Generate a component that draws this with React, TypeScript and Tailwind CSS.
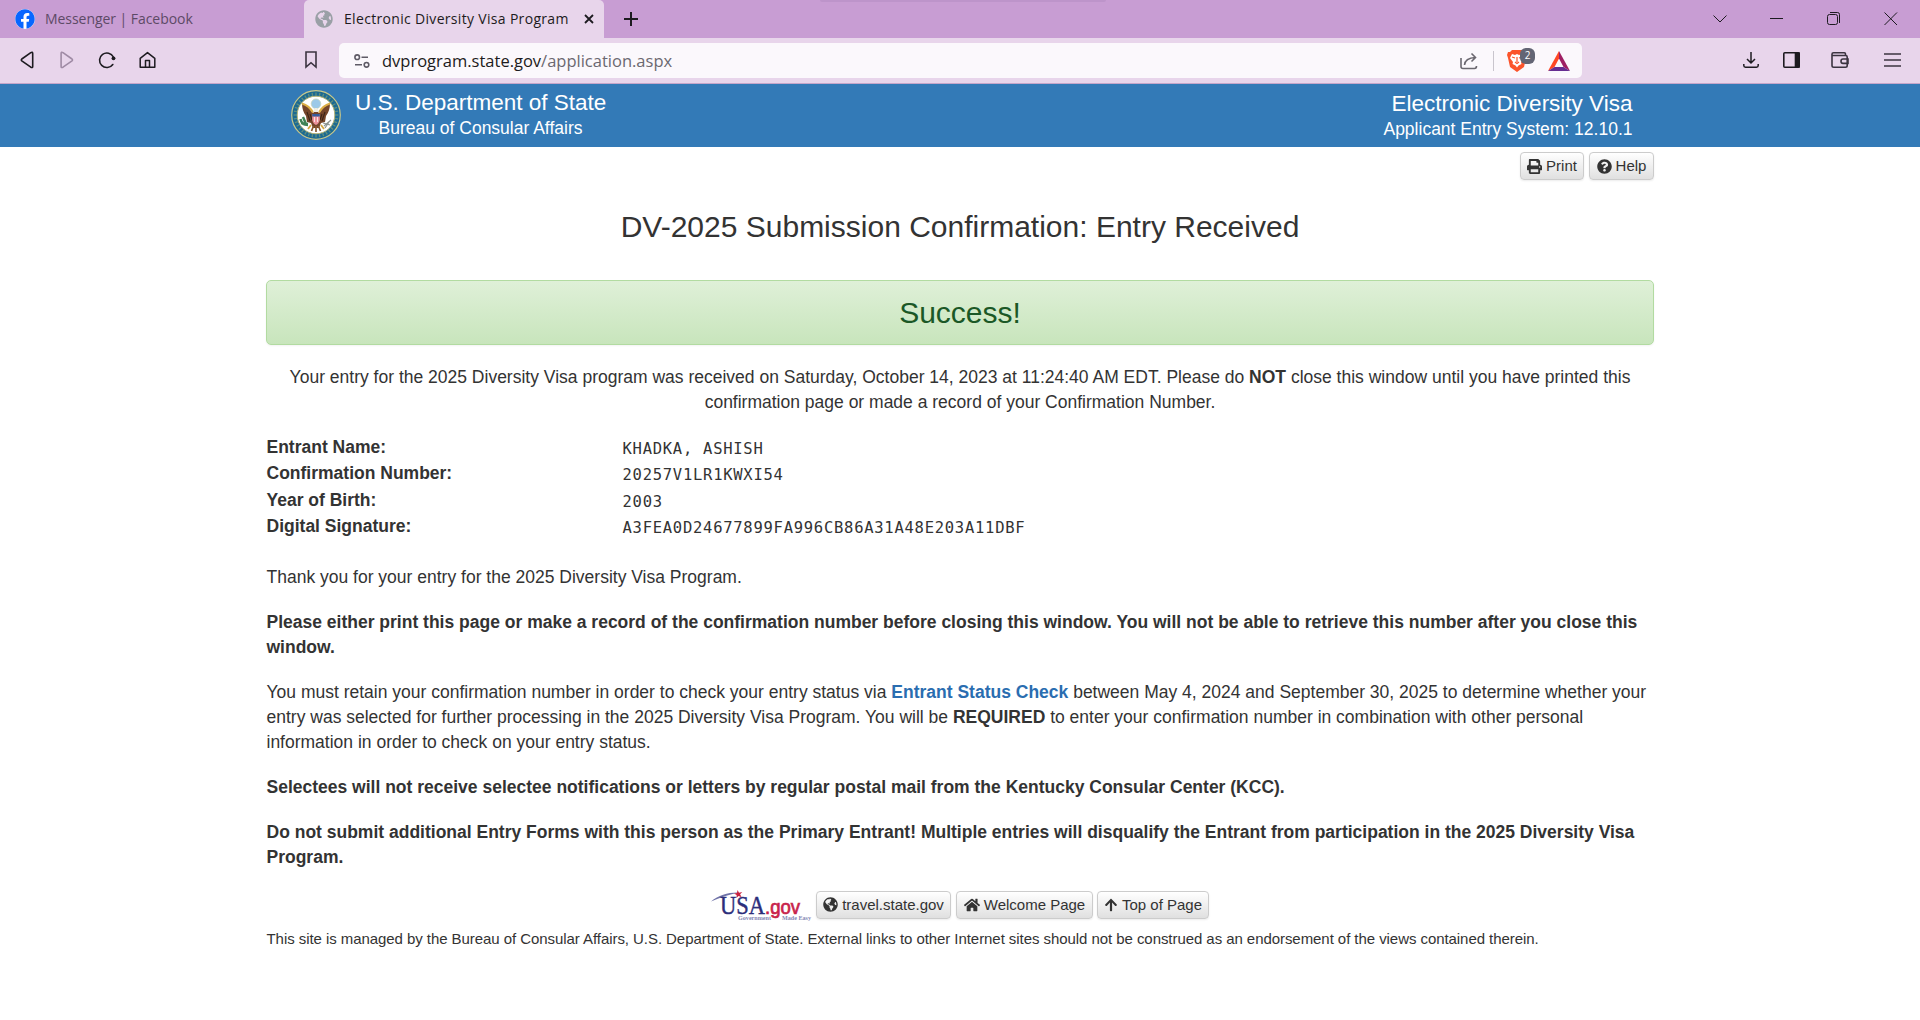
import React from "react";
import { FaPrint, FaQuestionCircle, FaGlobeAmericas, FaHome, FaArrowUp, FaFacebook } from "react-icons/fa";

const btn =
  "inline-flex h-[28px] items-center gap-[4px] rounded-[4px] border border-[#ccc] bg-linear-to-b from-white to-[#e0e0e0] text-[15px] leading-[22px] text-[#333] shadow-[0_1px_2px_rgba(0,0,0,0.08)] whitespace-nowrap";

function Seal() {
  const angles = Array.from({ length: 36 }, (_, i) => i * 10);
  return (
    <svg viewBox="0 0 50 50" className="h-[50px] w-[50px]">
      <circle cx="25" cy="25" r="24.3" fill="#1c6a92" stroke="#c9c88a" strokeWidth="1.2" />
      {angles.map((a) => (
        <path key={a} d="M25 2.6v3" stroke="#8fa873" strokeWidth="1.3" opacity=".6" transform={`rotate(${a} 25 25)`} />
      ))}
      <circle cx="25" cy="25" r="18.8" fill="#fff" stroke="#b9b675" strokeWidth="1" />
      <circle cx="25" cy="13.8" r="4.8" fill="#9cc9e8" stroke="#c4d3c0" strokeWidth=".8" />
      <path d="M11 13l6 4 5 6 3-3 3 3 5-6 6-4q0 8-4 13l-1 6-4 1-2 5h-6l-2-5-4-1-1-6q-4-5-4-13z" fill="#74452a" />
      <path d="M11 13.500q7 2 11 9M39 13.500q-7 2-11 9" stroke="#dcae45" strokeWidth="2.200" fill="none" />
      <path d="M16 22l3 9M19 24l2 6M34 22l-3 9M31 24l-2 6" stroke="#3b2418" strokeWidth="1.100" />
      <path d="M22.500 22q0-4 2.500-4t2.500 4z" fill="#f1eee3" />
      <path d="M21.200 24h7.600v6q-1 4-3.800 5-2.800-1-3.800-5z" fill="#ec929a" />
      <path d="M21.200 24h7.600v2.500h-7.600z" fill="#345c9c" />
      <path d="M23.500 27v5M26.500 27v5" stroke="#fff" strokeWidth=".7" />
      <path d="M9.500 29q1 6 7.500 6M12 27l3 7M10 33l7 1" stroke="#3f8356" strokeWidth="2.400" fill="none" />
      <path d="M33 36l7-6M32 33l7 2M34 38l4-6" stroke="#8c938f" strokeWidth="1.200" />
      <path d="M20 35l-3 4M30 35l3 4" stroke="#d3a640" strokeWidth="1.800" />
      <path d="M22.500 36l-2 5M27.500 36l2 5M25 36v6" stroke="#8a5a30" strokeWidth="1.700" />
    </svg>
  );
}

function UsaGov() {
  return (
    <svg viewBox="0 0 102 32" className="h-[32px] w-[102px]">
      <path d="M0 11.500C8 5 17 2.300 28 2.600 18 5 9 7.500 0 11.500z" fill="#6f72a8" />
      <path d="M26.500 0l1.500 2.700 3.300-.7-2.200 2.300 1.500 2.900-3-1.300-2.200 2.200.3-3.200-2.700-1.400 3-.600z" fill="#c8203f" />
      <text x="9" y="24" fontFamily="Liberation Serif" fontSize="25" fill="#2c2e7b" stroke="#2c2e7b" strokeWidth=".4" textLength="45" lengthAdjust="spacingAndGlyphs">USA</text>
      <text x="54" y="24" fontFamily="Liberation Sans" fontSize="19.500" fill="#c8234a" stroke="#c8234a" strokeWidth=".7" textLength="35" lengthAdjust="spacingAndGlyphs">.gov</text>
      <text x="27" y="29.500" fontFamily="Liberation Serif" fontWeight="bold" fontSize="5.500" fill="#8587b4" textLength="33" lengthAdjust="spacingAndGlyphs">Government</text>
      <text x="71" y="29.500" fontFamily="Liberation Serif" fontWeight="bold" fontSize="5.500" fill="#8587b4" textLength="29" lengthAdjust="spacingAndGlyphs">Made Easy</text>
    </svg>
  );
}

function BrowserChrome() {
  return (
    <>
      <div className="relative flex h-[38px] bg-[#c89dd3]">
        <div className="flex w-[304px] items-center pl-[15px] font-['Open_Sans',sans-serif] text-[#5d4a66]">
          <span className="flex size-[20px] items-center justify-center rounded-full bg-white">
            <FaFacebook className="size-[20px] shrink-0 text-[#0866ff]" />
          </span>
          <span className="mb-[2px] ml-[10px] w-[148px] text-[14px] tracking-[-0.05px] whitespace-nowrap">Messenger | Facebook</span>
        </div>
        <div className="flex w-[300px] items-center rounded-t-[5px] bg-[#e8d5eb] pl-[11px] text-[#1d1b20]">
          <FaGlobeAmericas className="size-[18px] text-[#9aa0a6]" />
          <span className="mb-[2px] ml-[11px] w-[225px] font-['Open_Sans',sans-serif] text-[14px] font-medium tracking-[0.32px] whitespace-nowrap">Electronic Diversity Visa Program</span>
          <svg viewBox="0 0 10 10" className="ml-[15px] size-[10px]" fill="none" stroke="#1d1b20" strokeWidth="1.800"><path d="M1 1l8 8M9 1L1 9" /></svg>
        </div>
        <svg viewBox="0 0 14 14" className="mt-[12px] ml-[20px] size-[14px]" stroke="#1d1b20" strokeWidth="2"><path d="M7 0v14M0 7h14" /></svg>
        <div className="absolute top-0 left-[820px] h-[2px] w-[286px] rounded-b bg-[#bd94ca]" />
        <div className="mr-[22px] ml-auto flex items-center gap-[43px]">
          <svg viewBox="0 0 14 14" className="size-[14px]" fill="none" stroke="#1d1b20"><path d="M.500 3.500L7 10l6.500-6.500" /></svg>
          <svg viewBox="0 0 14 14" className="size-[14px]" fill="none" stroke="#1d1b20"><path d="M0 6.500h13" /></svg>
          <svg viewBox="0 0 14 14" className="size-[14px]" fill="none" stroke="#1d1b20"><rect x=".500" y="2.500" width="10" height="10" rx="2" /><path d="M3 .500h7.500q2 0 2 2V11" /></svg>
          <svg viewBox="0 0 14 14" className="size-[14px]" fill="none" stroke="#1d1b20"><path d="M.500.500l12.500 12.500M13 .500L.500 13" /></svg>
        </div>
      </div>
      <div className="flex h-[46px] items-center border-b border-[#c4a6ca] bg-[#e8d5eb]">
        <svg viewBox="0 0 160 24" className="mb-px ml-[10px] h-[24px] w-[160px] shrink-0" fill="none" stroke="#1d1b20" strokeWidth="1.600" strokeLinecap="round" strokeLinejoin="round">
          <path d="M20.800 4.600q1.900-1 1.900.8v13q0 1.800-1.900.8l-9-6.400q-1-.9 0-1.800z" />
          <path d="M53 4.600q-1.900-1-1.900.8v13q0 1.800 1.900.8l9-6.400q1-.9 0-1.800z" stroke="#9f8ba5" />
          <path d="M102.800 16.500a7.300 7.300 0 1 1 .6-7.500" />
          <circle cx="103.500" cy="10.300" r="1.900" fill="#1d1b20" stroke="none" />
          <path d="M130.200 10.300l7.300-5.700 7.300 5.700v8.900h-14.600zM135.500 19v-6.500h4v6.500" strokeWidth="1.500" />
        </svg>
        <svg viewBox="0 0 12 18" className="mb-px ml-[135px] h-[18px] w-[12px] shrink-0" fill="none" stroke="#3b3440" strokeWidth="1.600"><path d="M1 1h10v15l-5-4.300L1 16z" /></svg>
        <div className="ml-[22px] flex h-[35px] w-[1243px] shrink-0 items-center rounded-[5px] bg-[#fbf8fc] pl-[15px]">
          <svg viewBox="0 0 16 14" className="h-[14px] w-[16px]" fill="none" stroke="#5f5b66" strokeWidth="1.600"><circle cx="3.200" cy="3.200" r="2.300" /><circle cx="12.500" cy="10.800" r="2.300" /><path d="M7.500 3.200H14M1 10.800h7" /></svg>
          <span className="ml-[12px] w-[300px] font-['Open_Sans',sans-serif] text-[16.500px] whitespace-nowrap text-[#1d1b20]">dvprogram.state.gov<span className="text-[#6b6870]">/application.aspx</span></span>
          <svg viewBox="0 0 18 18" className="mr-[15px] ml-auto size-[18px]" fill="none" stroke="#6b6870" strokeWidth="1.600"><path d="M1 6v8.500q0 2 2 2h11.500q2 0 2-2.500M4.500 13Q5 6 15.500 5.500M11.500 1.500l4 4-4 4" /></svg>
          <span className="h-[20px] w-px bg-[#c9c5cd]" />
          <div className="relative ml-[13px] h-[24px] w-[41px]">
            <svg viewBox="0 0 20 24" className="h-[24px] w-[20px]">
              <path d="M5 1h10l2 2h2l1 3-1 3-2 9-7 5-7-5-2-9-1-3 1-3h2z" fill="#fb542b" />
              <path d="M5 5l3 1 2-1 2 1 3-1 2 4-3 4 .500 2-3 1.500-1.500 2-1.500-2L5.500 15l.500-2-3-4z" fill="#fff" />
              <path d="M5 8l3 1M15 8l-3 1M10 8v5M8 13l2 1.500 2-1.500" stroke="#fb542b" strokeWidth="1.200" fill="none" />
            </svg>
            <span className="absolute -top-px left-[13px] flex h-[16px] w-[15px] items-center justify-center rounded-[6px] bg-[#636574] font-['Open_Sans',sans-serif] text-[10px] text-white">2</span>
          </div>
          <svg viewBox="0 0 22 20" className="mr-[12px] h-[20px] w-[22px]"><path d="M11 0L0 20l6.500-4L11 7.500z" fill="#ff4724" /><path d="M11 0l11 20-6.500-4L11 7.500z" fill="#9e1f63" /><path d="M0 20h22l-6.500-4h-9z" fill="#662d91" /></svg>
        </div>
        <div className="mr-[19px] mb-px ml-auto flex items-center">
          <svg viewBox="0 0 16 16" className="size-[16px]" fill="none" stroke="#1d1b20" strokeWidth="1.500"><path d="M8 0v11M4 7l4 4 4-4M.800 12v1.500q0 1.700 1.700 1.700h11q1.700 0 1.700-1.700V12" /></svg>
          <svg viewBox="0 0 17 16" className="ml-[24px] h-[16px] w-[17px]" fill="none" stroke="#1d1b20" strokeWidth="1.600"><rect x=".800" y=".800" width="15.400" height="14.400" rx="1" /><path d="M12.500 1h3.500v14h-3.500z" fill="#1d1b20" /></svg>
          <svg viewBox="0 0 18 16" className="ml-[31px] h-[16px] w-[18px]" fill="none" stroke="#3b3440" strokeWidth="1.600"><path d="M14.500 3.500V2q0-1.200-1.200-1.200H2.500Q1 .800 1 2.300v11.200q0 1.700 1.700 1.700h11.800q1.700 0 1.700-1.700V5q0-1.500-1.500-1.500H1.500M17 7h-5q-2 0-2 2.200t2 2.200h5z" /></svg>
          <svg viewBox="0 0 17 14" className="ml-[35px] h-[14px] w-[17px]" stroke="#3b3440" strokeWidth="1.600"><path d="M0 1h17M0 7h17M0 13h17" /></svg>
        </div>
      </div>
    </>
  );
}

const rows = [
  ["Entrant Name:", "KHADKA, ASHISH"],
  ["Confirmation Number:", "20257V1LR1KWXI54"],
  ["Year of Birth:", "2003"],
  ["Digital Signature:", "A3FEA0D24677899FA996CB86A31A48E203A11DBF"],
];

export default function App() {
  return (
    <div className="h-[1020px] w-[1920px] overflow-hidden bg-white font-['Liberation_Sans',Arial,sans-serif] text-[17.500px] leading-[25px] text-[#333]">
      <BrowserChrome />
      <header className="flex h-[63px] bg-[#337ab7] pr-[287.500px] pl-[291px] text-white">
        <div className="mt-[6px]"><Seal /></div>
        <div className="mt-[5px] ml-[14px] w-[251px] text-center">
          <div className="text-[22.500px] leading-[28px] whitespace-nowrap">U.S. Department of State</div>
          <div className="text-[17.500px] leading-[22px]">Bureau of Consular Affairs</div>
        </div>
        <div className="mt-[6px] ml-auto text-right">
          <div className="text-[22.500px] leading-[28px]">Electronic Diversity Visa</div>
          <div className="text-[17.500px] leading-[22px]">Applicant Entry System: 12.10.1</div>
        </div>
      </header>
      <main className="mx-auto w-[1388px]">
        <div className="flex justify-end gap-[5px] pt-[5px]">
          <span className={btn + " w-[64px] justify-center"}><FaPrint className="size-[15px]" />Print</span>
          <span className={btn + " w-[65px] justify-center"}><FaQuestionCircle className="size-[15px]" />Help</span>
        </div>
        <h1 className="mt-[30px] text-center text-[30px] leading-[33px]">DV-2025 Submission Confirmation: Entry Received</h1>
        <div className="mt-[37px] flex h-[65px] items-center justify-center rounded-[5px] border border-[#b2dba1] bg-linear-to-b from-[#dff0d8] to-[#c8e5bc] text-[30px] leading-[33px] text-[#1b5826] shadow-[0_1px_2px_rgba(0,0,0,0.05)]">Success!</div>
        <p className="mt-[20px] text-center">
          Your entry for the 2025 Diversity Visa program was received on Saturday, October 14, 2023 at 11:24:40 AM EDT. Please do <b>NOT</b> close this window until you have printed this<br />confirmation page or made a record of your Confirmation Number.
        </p>
        <div className="-mr-px pl-[0.500px]">
          <dl className="mt-[20px]">
            {rows.map(([k, v]) => (
              <div key={k} className="flex h-[26.400px]">
                <dt className="w-[356px] font-bold">{k}</dt>
                <dd className="pt-[2px] font-['DejaVu_Sans_Mono',monospace] text-[15.500px] tracking-[0.740px]">{v}</dd>
              </div>
            ))}
          </dl>
          <p className="mt-[24px]">Thank you for your entry for the 2025 Diversity Visa Program.</p>
          <p className="mt-[20px] font-bold">Please either print this page or make a record of the confirmation number before closing this window. You will not be able to retrieve this number after you close this<br />window.</p>
          <p className="mt-[20px]">
            You must retain your confirmation number in order to check your entry status via <b className="text-[#2a6db0]">Entrant Status Check</b> between May 4, 2024 and September 30, 2025 to determine whether your<br />entry was selected for further processing in the 2025 Diversity Visa Program. You will be <b>REQUIRED</b> to enter your confirmation number in combination with other personal<br />information in order to check on your entry status.
          </p>
          <p className="mt-[20px] font-bold">Selectees will not receive selectee notifications or letters by regular postal mail from the Kentucky Consular Center (KCC).</p>
          <p className="mt-[20px] font-bold">Do not submit additional Entry Forms with this person as the Primary Entrant! Multiple entries will disqualify the Entrant from participation in the 2025 Diversity Visa<br />Program.</p>
        </div>
        <footer>
          <div className="mt-[20px] flex h-[32px] pl-[445px]">
            <UsaGov />
            <span className={btn + " mt-px ml-[3px] w-[135px] justify-center"}><FaGlobeAmericas className="size-[15px]" />travel.state.gov</span>
            <span className={btn + " mt-px ml-[5px] w-[137px] justify-center"}><FaHome className="size-[16px]" />Welcome Page</span>
            <span className={btn + " mt-px ml-[4px] w-[112px] justify-center"}><FaArrowUp className="size-[14px]" />Top of Page</span>
          </div>
          <p className="mt-[6px] pl-[0.500px] text-[15px] leading-[22px] tracking-[-0.060px]">This site is managed by the Bureau of Consular Affairs, U.S. Department of State. External links to other Internet sites should not be construed as an endorsement of the views contained therein.</p>
        </footer>
      </main>
    </div>
  );
}
